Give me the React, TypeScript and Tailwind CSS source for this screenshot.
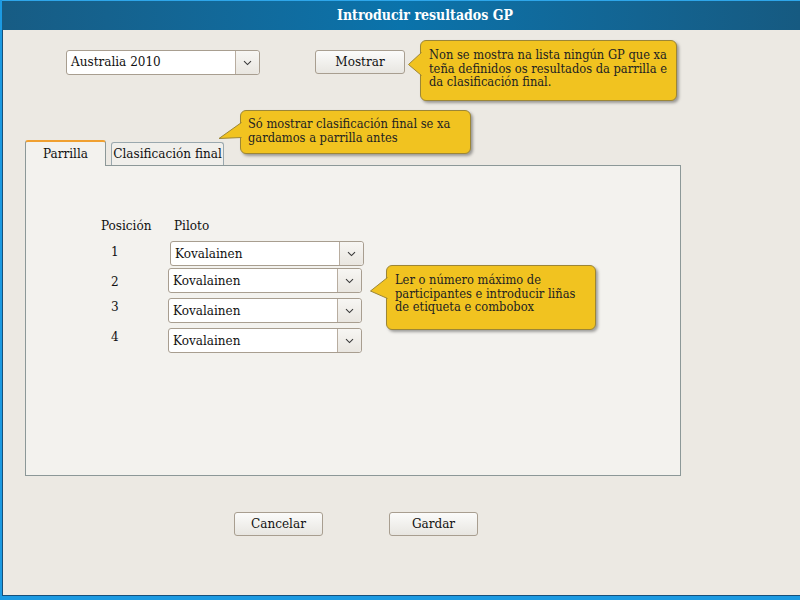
import React from 'react';

const serif = "font-['DejaVu_Serif_Condensed','DejaVu_Serif',serif] font-stretch-condensed";

const Chevron: React.FC = () => (
  <svg width="9" height="6" viewBox="0 0 9 6" fill="none">
    <path d="M1 1.2 L4.5 4.6 L8 1.2" stroke="#3a3a3a" strokeWidth="1.1" />
  </svg>
);

const Combo: React.FC<{ value: string; className?: string }> = ({ value, className = '' }) => (
  <div className={`flex h-[25px] w-[194px] rounded-[3px] border border-[#a89e90] bg-white ${className}`}>
    <div className="flex flex-1 items-center pl-[4px] text-[13.4px] text-[#111]">{value}</div>
    <div className="flex w-[24px] items-center justify-center rounded-r-[3px] border-l border-[#b8ada0] bg-gradient-to-b from-[#f7f6f3] to-[#e9e6e0]">
      <Chevron />
    </div>
  </div>
);

const Button: React.FC<{ label: string; className?: string }> = ({ label, className = '' }) => (
  <div className={`flex h-[24px] w-[89px] items-center justify-center rounded-[3px] border border-[#a89e90] bg-gradient-to-b from-[#fbfbfa] to-[#e8e6e1] text-[13.4px] text-[#111] ${className}`}>
    {label}
  </div>
);

const Tip: React.FC<{ className: string; children: React.ReactNode }> = ({ className, children }) => (
  <div className={`absolute rounded-[6px] border border-[#9c8636] bg-[#f1c320] text-[12.75px] leading-[13.5px] text-[#222] shadow-[2px_2px_3px_rgba(0,0,0,0.35)] ${className}`}>
    {children}
  </div>
);

export default function App() {
  const rows = [
    { n: '1', numTop: 'mt-[3px]', gap: 'mt-[7px]', combo: 'ml-[51px]' },
    { n: '2', numTop: 'mt-[6px]', gap: 'mt-[2px]', combo: 'ml-[49px]' },
    { n: '3', numTop: 'mt-[1px]', gap: 'mt-[5px]', combo: 'ml-[49px]' },
    { n: '4', numTop: 'mt-[1px]', gap: 'mt-[5px]', combo: 'ml-[49px]' },
  ];

  return (
    <div className={`${serif} flex h-[600px] w-[800px] flex-col border-b-[4px] border-l-[2px] border-[#1c9ae2] bg-[#ece9e3]`}>
      <div className="flex h-[30px] items-center justify-center border-t border-[#2ea6ea] bg-gradient-to-r from-[#175c84] via-[#0a73ab] to-[#165a81] pl-[48px] text-[14px] font-bold text-white">
        Introducir resultados GP
      </div>

      <div className="relative flex flex-1 flex-col border-b border-l border-[#16507a]">
        <div className="mt-[20px] flex items-start pl-[63px]">
          <Combo value="Australia 2010" className="w-[194px]" />
          <Button label="Mostrar" className="ml-[55px] w-[90px]" />
        </div>

        <div className="ml-[22px] mt-[65px] flex items-end">
          <div className="relative z-10 -mb-px flex h-[26px] w-[81px] items-center justify-center rounded-t-[3px] border-x border-t-2 border-x-[#8c9898] border-t-[#f0a030] bg-[#f3f2ee] text-[13.4px] text-[#111]">
            Parrilla
          </div>
          <div className="ml-[5px] flex h-[23px] w-[113px] items-center justify-center rounded-t-[3px] border-x border-t border-[#9aa8ae] bg-[#f0efeb] text-[13.4px] text-[#111]">
            Clasificación final
          </div>
        </div>

        <div className="ml-[22px] h-[311px] w-[656px] border border-[#8c9898] bg-[#f3f2ee] pl-[75px] pt-[52px] text-[13.4px] leading-[16px] text-[#111]">
          <div className="flex">
            <span className="w-[52px]">Posición</span>
            <span className="ml-[21px]">Piloto</span>
          </div>
          {rows.map((r) => (
            <div key={r.n} className={`flex items-start ${r.gap}`}>
              <span className={`ml-[10px] w-[8px] ${r.numTop}`}>{r.n}</span>
              <Combo value="Kovalainen" className={r.combo} />
            </div>
          ))}
        </div>

        <div className="mt-[36px] flex pl-[231px]">
          <Button label="Cancelar" />
          <Button label="Gardar" className="ml-[66px]" />
        </div>

        <Tip className="left-[417px] top-[10px] h-[61px] w-[257px] px-[8px] pt-[7px]">
          <svg className="absolute left-[-13px] top-[11px]" width="14" height="24" viewBox="0 0 14 24">
            <path d="M13.5 0.5 L0.5 12.5 L13.5 23.5" fill="#f1c320" stroke="#9c8636" />
          </svg>
          Non se mostra na lista ningún GP que xa teña definidos os resultados da parrilla e da clasificación final.
        </Tip>

        <Tip className="left-[237px] top-[80px] h-[44px] w-[231px] px-[7px] pt-[6px]">
          <svg className="absolute left-[-23px] top-[11px]" width="24" height="18" viewBox="0 0 24 18">
            <path d="M23.5 0.5 L1 16.5 L23.5 15.5" fill="#f1c320" stroke="#9c8636" />
          </svg>
          Só mostrar clasificación final se xa gardamos a parrilla antes
        </Tip>

        <Tip className="left-[383px] top-[235px] h-[65px] w-[210px] pl-[8px] pr-[12px] pt-[7px]">
          <svg className="absolute left-[-17px] top-[11px]" width="18" height="22" viewBox="0 0 18 22">
            <path d="M17.5 0.5 L0.5 14 L17.5 21.5" fill="#f1c320" stroke="#9c8636" />
          </svg>
          Ler o número máximo de participantes e introducir liñas de etiqueta e combobox
        </Tip>
      </div>
    </div>
  );
}
